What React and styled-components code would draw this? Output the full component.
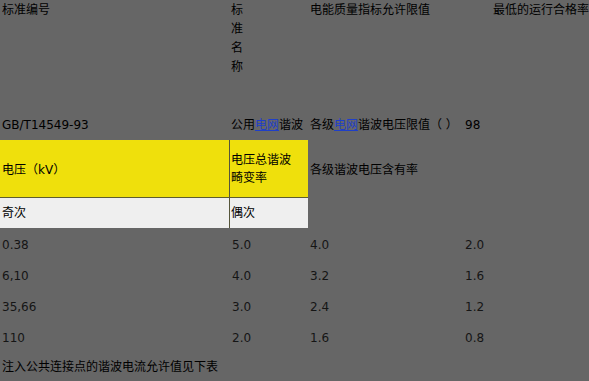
import React from "react";
import styled, { createGlobalStyle } from "styled-components";

const GlobalStyle = createGlobalStyle`
  html, body {
    margin: 0;
    padding: 0;
    background: #666666;
  }
  body {
    font-family: "DejaVu Sans", "Noto Sans CJK SC", sans-serif;
    font-size: 12px;
    color: #000;
    width: 589px;
    height: 381px;
    overflow: hidden;
  }
`;

const Sheet = styled.div`
  display: flex;
  flex-direction: column;
`;

const Row = styled.div`
  display: grid;
  grid-template-columns: 230px 78px 155px 1fr;
  height: ${(p) => p.$h}px;
`;

const Cell = styled.div`
  display: flex;
  align-items: ${(p) => (p.$top ? "flex-start" : "center")};
  padding-left: ${(p) => p.$pad ?? 2}px;
  padding-top: ${(p) => (p.$top ? 1 : p.$dy || 0)}px;
  background: ${(p) => p.$fill || "transparent"};
  color: ${(p) => p.$ink || "#000"};
  line-height: ${(p) => p.$lh || 19}px;
  white-space: nowrap;
  box-sizing: border-box;
  border-right: ${(p) => (p.$splitRight ? "1px solid #55553a" : "none")};
  border-bottom: ${(p) => (p.$splitBottom ? "1px solid #5e5e30" : "none")};
  overflow: hidden;
`;

const Stacked = styled.span`
  display: block;
  white-space: normal;
  width: 12px;
  line-height: 19px;
`;

const TwoLine = styled.span`
  display: block;
  white-space: normal;
  line-height: 18px;
`;

const Link = styled.a`
  color: #1f3fc8;
  text-decoration: underline;
`;

const YELLOW = "#efe00c";
const PALE = "#efefef";

const limits = [
  ["0.38", "5.0", "4.0", "2.0"],
  ["6,10", "4.0", "3.2", "1.6"],
  ["35,66", "3.0", "2.4", "1.2"],
  ["110", "2.0", "1.6", "0.8"],
];

export default function App() {
  return (
    <>
      <GlobalStyle />
      <Sheet>
        <Row $h={110}>
          <Cell $top>标准编号</Cell>
          <Cell $top $pad={1}>
            <Stacked>标准名称</Stacked>
          </Cell>
          <Cell $top>电能质量指标允许限值</Cell>
          <Cell $top $pad={30}>最低的运行合格率</Cell>
        </Row>

        <Row $h={30}>
          <Cell>GB/T14549-93</Cell>
          <Cell $pad={1}>
            公用<Link href="#">电网</Link>谐波
          </Cell>
          <Cell>
            各级<Link href="#">电网</Link>谐波电压限值（ ）
          </Cell>
          <Cell>98</Cell>
        </Row>

        <Row $h={58}>
          <Cell $fill={YELLOW} $splitRight $splitBottom $dy={3}>
            电压（kV）
          </Cell>
          <Cell $fill={YELLOW} $splitBottom $pad={1}>
            <TwoLine>
              电压总谐波
              <br />
              畸变率
            </TwoLine>
          </Cell>
          <Cell $dy={2}>各级谐波电压含有率</Cell>
          <Cell />
        </Row>

        <Row $h={30}>
          <Cell $fill={PALE} $splitRight>
            奇次
          </Cell>
          <Cell $fill={PALE} $pad={1}>
            偶次
          </Cell>
          <Cell />
          <Cell />
        </Row>

        {limits.map((r) => (
          <Row key={r[0]} $h={31}>
            <Cell $ink="#151515" $dy={4}>{r[0]}</Cell>
            <Cell $ink="#151515" $dy={4}>{r[1]}</Cell>
            <Cell $ink="#151515" $dy={4}>{r[2]}</Cell>
            <Cell $ink="#151515" $dy={4}>{r[3]}</Cell>
          </Row>
        ))}

        <Row $h={31}>
          <Cell>注入公共连接点的谐波电流允许值见下表</Cell>
        </Row>
      </Sheet>
    </>
  );
}
